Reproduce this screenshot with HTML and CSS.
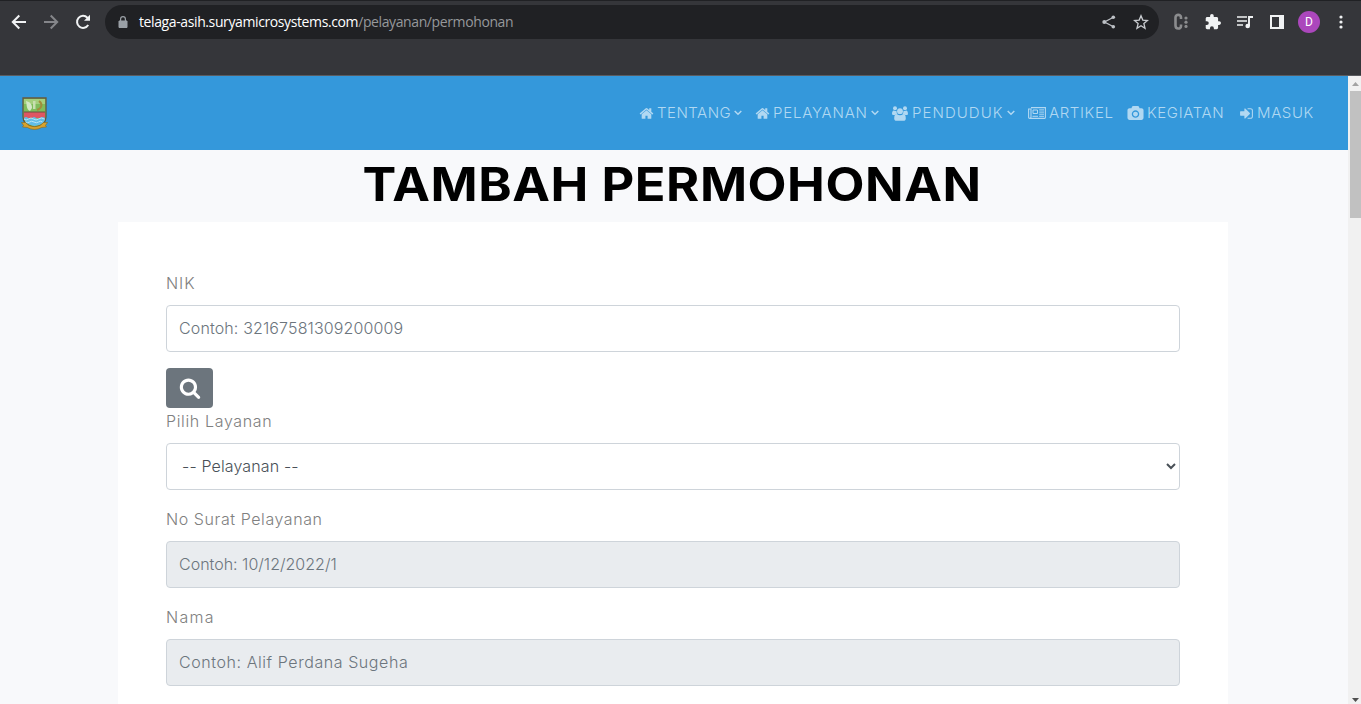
FILE: index.html
```
<!DOCTYPE html>
<html lang="id">
<head>
<meta charset="utf-8">
<title>Tambah Permohonan</title>
<link rel="stylesheet" href="styles.css">
</head>
<body>
<svg class="defs" aria-hidden="true">
  <symbol id="home" viewBox="0 0 1792 1792"><path d="M1472 992v480q0 26-19 45t-45 19h-384v-384h-256v384h-384q-26 0-45-19t-19-45v-480q0-1 .5-3t.5-3l575-474 575 474q1 2 1 6zm223-69l-62 74q-8 9-21 11h-3q-13 0-21-7l-692-577-692 577q-12 8-24 7-13-2-21-11l-62-74q-8-10-7-23.5t11-21.5l719-599q32-26 76-26t76 26l244 204v-195q0-14 9-23t23-9h192q14 0 23 9t9 23v408l219 182q10 8 11 21.5t-7 23.5z"/></symbol>
  <symbol id="chev" viewBox="0 0 8 6"><path d="M.7 1 4 4.3 7.3 1" fill="none" stroke="currentColor" stroke-width="1.5"/></symbol>
</svg>
<header class="browser">
  <div class="toolbar">
    <svg class="ctl back" viewBox="0 0 16 16"><path d="M15 8H2M8.3 1.5 1.8 8l6.5 6.5"/></svg>
    <svg class="ctl forward" viewBox="0 0 16 16"><path d="M1 8h13M7.7 1.5 14.2 8l-6.5 6.5"/></svg>
    <svg class="ctl reload" viewBox="0 0 16 16"><path d="M13.2 11A6 6 0 1 1 12.4 3.7L14 5.4"/><path d="M15 .8v6H9z" class="solid"/></svg>
    <div class="address">
      <svg class="lock" viewBox="0 0 10 12"><path d="M1 5h8v6.5H1z" fill="#9aa0a6" stroke="#9aa0a6" stroke-linejoin="round"/><path d="M2.6 5V3a2.4 2.4 0 0 1 4.8 0v2" fill="none" stroke="#9aa0a6" stroke-width="1.2"/></svg>
      <span class="url"><b>telaga-asih.suryamicrosystems.com</b><i>/pelayanan/permohonan</i></span>
      <svg class="share" viewBox="0 0 14 14"><path d="M11.5 2.2 2.5 7l9 4.8" fill="none" stroke="#bdc1c6" stroke-width="1.3"/><g fill="#bdc1c6"><circle cx="11.3" cy="2.2" r="1.8"/><circle cx="2.3" cy="7" r="2"/><circle cx="11.3" cy="11.8" r="1.8"/></g></svg>
      <svg class="star" viewBox="0 0 16 16"><path d="m8 1.8 1.8 4.3 4.7.4-3.6 3.1 1.1 4.6L8 11.7l-4 2.5 1.1-4.6-3.6-3.1 4.7-.4z" fill="none" stroke="#c8cbcf" stroke-width="1.35"/></svg>
    </div>
    <div class="extensions">
      <svg width="16" height="18" viewBox="0 0 16 18"><path d="M8 6V4.5C8 1 2.5 1 2.5 4.5v8c0 4 5.500 4 5.500.5v-1.500" fill="none" stroke="#8b8c8e" stroke-width="2.600"/><g fill="#8b8c8e"><circle cx="13" cy="5" r="1.600"/><circle cx="13" cy="9.200" r="1.600"/><circle cx="13" cy="13.400" r="1.600"/></g></svg>
      <svg width="16" height="16" viewBox="1 1 22 22"><path fill="#f1f3f4" d="M20.500 11H19V7c0-1.100-.9-2-2-2h-4V3.500a2.500 2.500 0 0 0-5 0V5H4c-1.100 0-2 .9-2 2v3.800h1.500a2.700 2.700 0 0 1 0 5.400H2V20c0 1.100.9 2 2 2h3.800v-1.500a2.700 2.700 0 0 1 5.400 0V22H17c1.100 0 2-.9 2-2v-4h1.500a2.500 2.500 0 0 0 0-5z"/></svg>
      <svg width="16" height="14" viewBox="0 0 16 14"><path d="M0 2h10M0 6h10M0 10h6" stroke="#f1f3f4" stroke-width="1.700"/><path d="M12 11V2h4" fill="none" stroke="#f1f3f4" stroke-width="1.900"/><circle cx="10.700" cy="11" r="2.300" fill="#f1f3f4"/></svg>
      <svg class="panel" width="14" height="14" viewBox="0 0 14 14"><path fill="#f1f3f4" fill-rule="evenodd" d="M0 0h14v14H0zM2 2v10h7V2z"/></svg>
      <span class="avatar">D</span>
      <svg class="more" width="4" height="14" viewBox="0 0 4 14" fill="#f1f3f4"><circle cx="2" cy="2" r="1.600"/><circle cx="2" cy="7" r="1.600"/><circle cx="2" cy="12" r="1.600"/></svg>
    </div>
  </div>
</header>
<div class="viewport">
  <main class="page">
    <nav class="navbar">
      <svg class="crest" viewBox="0 0 27 33">
        <path d="M2 1h23v19c0 6-5 9-11.500 10.500C7 29 2 26 2 20z" fill="#7fbd5b" stroke="#65583c" stroke-width="1.300"/>
        <path d="M3 2h21v5H3z" fill="#a5cf7d"/>
        <path d="M5 4c4 1 6 3 6 7l-2 3C5 12 6 8 5 4z" fill="#d3e8c6"/><path d="M12 4h2.500v8H12z" fill="#c7dfb0"/>
        <path d="M18 4c4 3 3 7-2 9" fill="none" stroke="#a28c3c" stroke-width="2"/>
        <path d="M3 15h21v6H3z" fill="#df5663"/><path d="M3 15h21" stroke="#685440"/>
        <path d="M3 21q2-2 4 0t4 0 4 0 4 0 5 0v1c-1 5-5 6-10.500 7C8 28 4 26 3 21z" fill="#61bde8"/>
        <path d="M3 22q2 2 4.500 0t5 0 5 0 6 0M4.500 25q2 1.500 4 0t4.500 0 4.500 0 4 0" fill="none" stroke="#b9e4f6" stroke-width="1"/>
        <path d="M.5 25.500h4l3.500 3c4 1.500 7 1.500 11 0l3.500-3h4l-2 3 1 1.500-5 .5c-4 2.500-10 2.500-14 0L1.500 30l1-1.500z" fill="#d6a22e" stroke="#86681d" stroke-width=".6"/>
      </svg>
      <ul class="menu">
        <li class="tentang"><svg width="15" height="15"><use href="#home"/></svg><span>TENTANG</span><svg class="caret"><use href="#chev"/></svg></li>
        <li class="pelayanan"><svg width="15" height="15"><use href="#home"/></svg><span>PELAYANAN</span><svg class="caret"><use href="#chev"/></svg></li>
        <li class="penduduk"><svg width="16" height="15" viewBox="0 0 16 15"><circle cx="3" cy="2.300" r="2"/><circle cx="13" cy="2.300" r="2"/><path d="M0 8.300C0 5.700.8 4.600 1.600 4.600q1.500.8 3 .1c-.2 1.300.2 2.300.9 3-1 .1-1.700.5-2.200 1.200H1.200C.5 8.900 0 8.700 0 8.300zM16 8.300c0-2.600-.8-3.700-1.600-3.700q-1.500.8-3 .1c.2 1.300-.2 2.300-.9 3 1 .1 1.700.5 2.200 1.200h2.100c.7 0 1.200-.2 1.200-.6z"/><circle cx="8" cy="5.200" r="2.900"/><path d="M2.200 12.400c0-3 1.100-4.300 2.600-4.300 1.900 1.600 4.500 1.600 6.400 0 1.500 0 2.600 1.300 2.600 4.300 0 1.500-.9 2.300-2.300 2.300h-7c-1.400 0-2.300-.8-2.300-2.300z"/></svg><span>PENDUDUK</span><svg class="caret"><use href="#chev"/></svg></li>
        <li class="artikel"><svg width="18" height="12" viewBox="0 0 18 12"><path d="M3 .6h14.400v10q0 .8-.8.8H1.800q-1.200 0-1.200-1.200V2H3v8q0 1.200-1.200 1.400" fill="none" stroke="currentColor" stroke-width="1.100"/><path d="M5 3h4.500v3.500H5zM4.500 9.300H10M11.200 2.900H16M11.200 5.100H16M11.200 7.200H16M11.200 9.300H16" fill="none" stroke="currentColor"/></svg><span>ARTIKEL</span></li>
        <li class="kegiatan"><svg width="17" height="15" viewBox="-64 0 1920 1792"><path d="M896 672q119 0 203.500 84.500t84.500 203.500-84.500 203.500-203.500 84.500-203.500-84.500-84.500-203.500 84.500-203.500 203.500-84.500zm704-416q106 0 181 75t75 181v896q0 106-75 181t-181 75h-1408q-106 0-181-75t-75-181v-896q0-106 75-181t181-75h224l51-136q19-49 69.500-84.500t103.500-35.500h512q53 0 103.500 35.500t69.500 84.500l51 136h224zm-704 1152q185 0 316.500-131.500t131.500-316.500-131.500-316.500-316.500-131.500-316.500 131.500-131.500 316.500 131.500 316.500 316.500 131.500z"/></svg><span>KEGIATAN</span></li>
        <li class="masuk"><svg width="15" height="15" viewBox="0 0 1792 1792"><path d="M1312 896q0 26-19 45l-544 544q-19 19-45 19t-45-19-19-45v-288h-448q-26 0-45-19t-19-45v-384q0-26 19-45t45-19h448v-288q0-26 19-45t45-19 45 19l544 544q19 19 19 45zm352-352v704q0 119-84.500 203.500t-203.500 84.500h-320q-13 0-22.500-9.500t-9.500-22.500q0-4-1-20t-.5-26.500 3-23.500 10-19.500 20.500-6.500h320q66 0 113-47t47-113v-704q0-66-47-113t-113-47h-312l-11.500-1-11.500-3-8-5.500-7-9-2-13.500q0-4-1-20t-.5-26.500 3-23.500 10-19.500 20.500-6.500h320q119 0 203.500 84.500t84.500 203.500z"/></svg><span>MASUK</span></li>
      </ul>
    </nav>
    <h1 class="title">TAMBAH PERMOHONAN</h1>
    <form class="card">
      <label class="label nik" for="nik">NIK</label>
      <input class="field nik-field" id="nik" placeholder="Contoh: 32167581309200009">
      <button class="search" type="button" aria-label="Cari"><svg width="22" height="22" viewBox="0 0 1792 1792"><path fill="#fff" d="M1216 832q0-185-131.500-316.500t-316.500-131.500-316.500 131.500-131.500 316.500 131.500 316.500 316.500 131.500 316.500-131.500 131.500-316.500zm512 832q0 52-38 90t-90 38q-54 0-90-38l-343-342q-179 124-399 124-143 0-273.500-55.500t-225-150-150-225-55.500-273.500 55.500-273.500 150-225 225-150 273.500-55.500 273.500 55.500 225 150 150 225 55.500 273.500q0 220-124 399l343 343q37 37 37 90z"/></svg></button>
      <label class="label layanan" for="layanan">Pilih Layanan</label>
      <select class="field select" id="layanan"><option>-- Pelayanan --</option></select>
      <label class="label surat" for="surat">No Surat Pelayanan</label>
      <input class="field surat-field" id="surat" disabled placeholder="Contoh: 10/12/2022/1">
      <label class="label nama" for="nama">Nama</label>
      <input class="field nama-field" id="nama" disabled placeholder="Contoh: Alif Perdana Sugeha">
    </form>
  </main>
  <div class="scrollbar">
    <svg width="13" height="15" viewBox="0 0 13 15"><path d="M4 10h7L7.500 6z" fill="#a3a3a3"/></svg>
    <div class="thumb"></div>
    <svg class="down" width="13" height="15" viewBox="0 0 13 15"><path d="M4 9h7l-3.500 4z" fill="#505050"/></svg>
  </div>
</div>
</body>
</html>
```

FILE: styles.css
```
* { box-sizing: border-box; }
body { margin: 0; height: 704px; overflow: hidden; display: flex; flex-direction: column; font-family: Inter, "Open Sans", sans-serif; }
svg { display: block; flex: none; }
.defs { display: none; }

.browser { flex: none; height: 76px; background: #35363a; border-top: 1px solid #202124; border-bottom: 1px solid #5b5c60; }
.toolbar { display: flex; align-items: center; height: 34px; margin-top: 4px; padding-left: 11px; }
.ctl { width: 16px; height: 16px; fill: none; stroke: #f1f3f4; stroke-width: 2; margin-right: 16px; }
.forward { stroke: #85868a; }
.reload { margin-right: 14px; }
.ctl .solid { fill: #f1f3f4; stroke: none; }
.address { width: 1054px; height: 34px; border-radius: 17px; background: #202124; display: flex; align-items: center; padding: 0 10px 0 13px; }
.lock { width: 10px; height: 12px; margin-right: 11px; }
.url { flex: 1; font: 14px/20px "Open Sans", sans-serif; letter-spacing: -0.39px; white-space: nowrap; }
.url b { font-weight: 400; color: #fff; }
.url i { font-style: normal; color: #96989b; }
.share { width: 14px; height: 14px; margin-right: 17px; }
.star { width: 16px; height: 16px; }
.extensions { display: flex; align-items: center; margin-left: 14px; gap: 16px; }
.panel { margin-left: 1px; }
.avatar { width: 22px; height: 22px; margin: 0 -2px 0 -2px; border-radius: 50%; background: #ab47bc; color: #fff; font: 12px/22px Roboto, sans-serif; text-align: center; }
.more { margin-left: 5px; }

.viewport { flex: 1; min-height: 0; display: flex; }
.page { width: 1348px; background: #f8f9fb; overflow: hidden; }
.navbar { height: 74px; background: #3498db; display: flex; align-items: center; justify-content: space-between; padding: 0 35px 0 21px; }
.crest { width: 27px; height: 33px; }
.menu { list-style: none; margin: 0; padding: 0; display: flex; color: #b1d8f2; font-size: 15px; font-weight: 300; line-height: 20px; letter-spacing: 0.62px; }
.menu li { display: flex; align-items: center; white-space: nowrap; }
.menu li > svg { fill: currentColor; }
.menu span { margin-left: 3px; }
.menu .caret { width: 8px; height: 6px; margin-left: auto; }
.tentang { width: 103px; margin-right: 13px; letter-spacing: 0.5px; }
.pelayanan { width: 124px; margin-right: 13px; letter-spacing: 0.78px; }
.penduduk { width: 123px; margin-right: 13px; letter-spacing: 1.05px; }
.menu .penduduk span { margin-left: 4px; }
.artikel { width: 85px; margin-right: 14px; }
.kegiatan { width: 98px; margin-right: 14px; }
.masuk { width: 74px; }

.title { margin: 0; height: 72px; text-align: center; color: #000; font-size: 46px; font-weight: 700; line-height: 68px; letter-spacing: 0.5px; white-space: nowrap; transform: translateX(-2px) scaleX(1.1); }
.card { width: 1110px; margin: 0 auto 0 118px; padding: 48px; height: 520px; background: #fff; }
.label { display: block; height: 27px; margin-bottom: 8px; color: #808080; font-size: 16px; font-weight: 300; line-height: 27px; white-space: nowrap; }
.nik { letter-spacing: 0.9px; }
.layanan { letter-spacing: 0.65px; }
.surat { letter-spacing: 0.58px; }
.nama { letter-spacing: 1.3px; }
.field { display: block; width: 100%; height: 47px; margin: 0 0 16px; padding: 0 12px 2px; border: 1px solid #ced4da; border-radius: 4px; background: #fff; color: #495057; font: 300 16px/24px Inter, sans-serif; }
.field::placeholder { color: #6c757d; opacity: 1; }
.field:disabled { background: #e9ecef; }
.nik-field { letter-spacing: 0.13px; }
.select { padding-left: 11px; letter-spacing: 0.14px; }
.surat-field { letter-spacing: 0; }
.nama-field { letter-spacing: 0.57px; }
.search { display: flex; align-items: center; justify-content: center; width: 47px; height: 40px; padding: 0 0 1px; border: 0; border-radius: 4px; background: #6c757d; }

.scrollbar { width: 13px; background: #f1f1f1; display: flex; flex-direction: column; }
.thumb { width: 11px; height: 127px; margin-left: 2px; background: #c1c1c1; }
.down { margin-top: auto; }
```
